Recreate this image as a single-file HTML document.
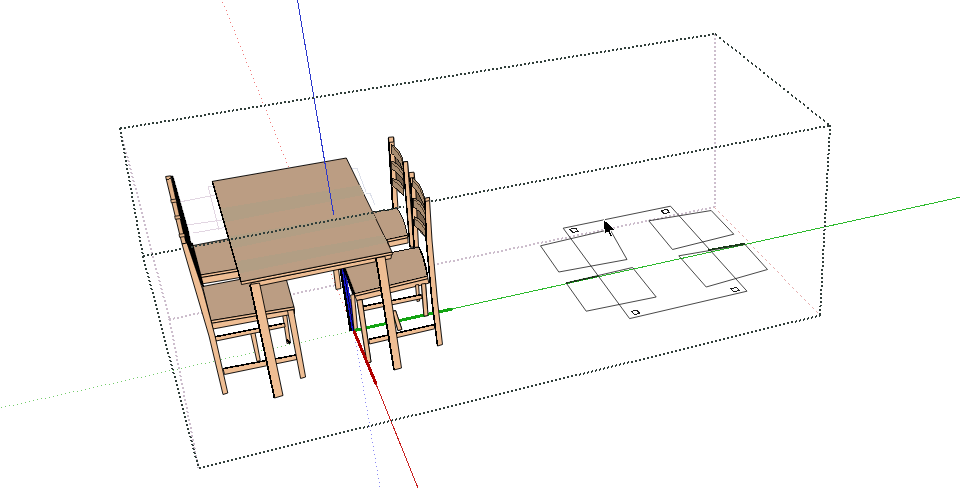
<!DOCTYPE html>
<html><head><meta charset="utf-8"><title>SketchUp view</title>
<style>html,body{margin:0;padding:0;background:#fff;overflow:hidden}svg{display:block}</style>
</head><body>
<svg shape-rendering="crispEdges" width="960" height="488" viewBox="0 0 960 488">
<rect width="960" height="488" fill="#fff"/>
<path d="M119,128h2v1h-2zM119,129h2v1h-2zM120,132h2v1h-2zM120,133h2v1h-2zM121,136h2v1h-2zM121,137h2v1h-2zM122,140h2v1h-2zM122,141h2v1h-2zM123,144h2v1h-2zM123,145h2v1h-2zM124,148h2v1h-2zM124,149h2v1h-2zM125,152h2v1h-2zM125,153h2v1h-2zM126,156h2v1h-2zM127,157h2v1h-2zM127,160h2v1h-2zM128,161h2v1h-2zM128,164h2v1h-2zM129,165h2v1h-2zM129,168h2v1h-2zM130,169h2v1h-2zM130,172h2v1h-2zM131,173h2v1h-2zM131,176h2v1h-2zM132,177h2v1h-2zM132,180h2v1h-2zM133,181h2v1h-2zM133,184h2v1h-2zM134,185h2v1h-2zM135,188h2v1h-2zM135,189h2v1h-2zM136,192h2v1h-2zM136,193h2v1h-2zM137,196h2v1h-2zM137,197h2v1h-2zM138,200h2v1h-2zM138,201h2v1h-2zM139,204h2v1h-2zM139,205h2v1h-2zM140,208h2v1h-2zM140,209h2v1h-2zM141,212h2v1h-2zM141,213h2v1h-2zM142,216h2v1h-2zM142,217h2v1h-2zM143,220h2v1h-2zM143,221h2v1h-2zM144,224h2v1h-2zM144,225h2v1h-2zM145,228h2v1h-2zM145,229h2v1h-2zM146,232h2v1h-2zM146,233h2v1h-2zM147,236h2v1h-2zM147,237h2v1h-2zM148,240h2v1h-2zM148,241h2v1h-2zM149,244h2v1h-2zM149,245h2v1h-2zM150,248h2v1h-2zM150,249h2v1h-2zM151,252h2v1h-2zM151,253h2v1h-2zM152,256h2v1h-2zM152,257h2v1h-2zM153,260h2v1h-2zM153,261h2v1h-2zM154,264h2v1h-2zM154,265h2v1h-2zM155,268h2v1h-2zM155,269h2v1h-2zM156,272h2v1h-2zM157,273h2v1h-2zM157,276h2v1h-2zM158,277h2v1h-2zM158,280h2v1h-2zM159,281h2v1h-2zM159,284h2v1h-2zM160,285h2v1h-2zM160,288h2v1h-2zM161,289h2v1h-2zM161,292h2v1h-2zM162,293h2v1h-2zM162,296h2v1h-2zM163,297h2v1h-2zM164,300h2v1h-2zM164,301h2v1h-2zM165,304h2v1h-2zM165,305h2v1h-2zM166,308h2v1h-2zM166,309h2v1h-2zM167,312h2v1h-2zM167,313h2v1h-2zM168,316h2v1h-2zM168,317h2v1h-2z" fill="#cdbecd" shape-rendering="crispEdges"/>
<path d="M168,319h2v1h-2zM169,320h2v1h-2zM169,323h2v1h-2zM169,324h2v1h-2zM170,327h2v1h-2zM170,328h2v1h-2zM171,331h2v1h-2zM171,332h2v1h-2zM172,335h2v1h-2zM172,336h2v1h-2zM172,339h2v1h-2zM173,340h2v1h-2zM173,343h2v1h-2zM173,344h2v1h-2zM174,347h2v1h-2zM174,348h2v1h-2zM175,351h2v1h-2zM175,352h2v1h-2zM175,355h2v1h-2zM176,356h2v1h-2zM176,359h2v1h-2zM176,360h2v1h-2zM177,363h2v1h-2zM177,364h2v1h-2zM178,367h2v1h-2zM178,368h2v1h-2zM179,371h2v1h-2zM179,372h2v1h-2zM179,375h2v1h-2zM180,376h2v1h-2zM180,379h2v1h-2zM180,380h2v1h-2zM181,383h2v1h-2zM181,384h2v1h-2zM182,387h2v1h-2zM182,388h2v1h-2zM183,391h2v1h-2zM183,392h2v1h-2zM183,395h2v1h-2zM183,396h2v1h-2zM184,399h2v1h-2zM184,400h2v1h-2zM185,403h2v1h-2zM185,404h2v1h-2zM186,407h2v1h-2zM186,408h2v1h-2zM186,411h2v1h-2zM187,412h2v1h-2zM187,415h2v1h-2zM187,416h2v1h-2zM188,419h2v1h-2zM188,420h2v1h-2zM189,423h2v1h-2zM189,424h2v1h-2zM190,427h2v1h-2zM190,428h2v1h-2zM190,431h2v1h-2zM191,432h2v1h-2zM191,435h2v1h-2zM191,436h2v1h-2zM192,439h2v1h-2zM192,440h2v1h-2zM193,443h2v1h-2zM193,444h2v1h-2zM193,447h2v1h-2zM194,448h2v1h-2zM194,451h2v1h-2zM194,452h2v1h-2zM195,455h2v1h-2zM195,456h2v1h-2zM196,459h2v1h-2zM196,460h2v1h-2zM197,463h2v1h-2zM197,464h2v1h-2zM197,467h2v1h-2z" fill="#cdbecd" shape-rendering="crispEdges"/>
<path d="M169,318h1v2h-1zM170,318h1v2h-1zM173,318h1v2h-1zM174,317h1v2h-1zM177,317h1v2h-1zM178,317h1v2h-1zM181,316h1v2h-1zM182,316h1v2h-1zM185,315h1v2h-1zM186,315h1v2h-1zM189,314h1v2h-1zM190,314h1v2h-1zM193,313h1v2h-1zM194,313h1v2h-1zM197,313h1v2h-1zM198,312h1v2h-1zM201,312h1v2h-1zM202,312h1v2h-1zM205,311h1v2h-1zM206,311h1v2h-1zM209,310h1v2h-1zM210,310h1v2h-1zM213,309h1v2h-1zM214,309h1v2h-1zM217,308h1v2h-1zM218,308h1v2h-1zM221,308h1v2h-1zM222,307h1v2h-1zM225,307h1v2h-1zM226,307h1v2h-1zM229,306h1v2h-1zM230,306h1v2h-1zM233,305h1v2h-1zM234,305h1v2h-1zM237,304h1v2h-1zM238,304h1v2h-1zM241,304h1v2h-1zM242,303h1v2h-1zM245,303h1v2h-1zM246,303h1v2h-1zM249,302h1v2h-1zM250,302h1v2h-1zM253,301h1v2h-1zM254,301h1v2h-1zM257,300h1v2h-1zM258,300h1v2h-1zM261,299h1v2h-1zM262,299h1v2h-1zM265,299h1v2h-1zM266,298h1v2h-1zM269,298h1v2h-1zM270,298h1v2h-1zM273,297h1v2h-1zM274,297h1v2h-1zM277,296h1v2h-1zM278,296h1v2h-1zM281,295h1v2h-1zM282,295h1v2h-1zM285,294h1v2h-1zM286,294h1v2h-1zM289,294h1v2h-1zM290,293h1v2h-1zM293,293h1v2h-1zM294,293h1v2h-1zM297,292h1v2h-1zM298,292h1v2h-1zM301,291h1v2h-1zM302,291h1v2h-1zM305,290h1v2h-1zM306,290h1v2h-1zM309,290h1v2h-1zM310,289h1v2h-1zM313,289h1v2h-1zM314,288h1v2h-1zM317,288h1v2h-1zM318,288h1v2h-1zM321,287h1v2h-1zM322,287h1v2h-1zM325,286h1v2h-1zM326,286h1v2h-1zM329,285h1v2h-1zM330,285h1v2h-1zM333,285h1v2h-1zM334,284h1v2h-1zM337,284h1v2h-1zM338,284h1v2h-1zM341,283h1v2h-1zM342,283h1v2h-1zM345,282h1v2h-1zM346,282h1v2h-1zM349,281h1v2h-1zM350,281h1v2h-1zM353,280h1v2h-1zM354,280h1v2h-1zM357,280h1v2h-1zM358,279h1v2h-1zM361,279h1v2h-1zM362,279h1v2h-1zM365,278h1v2h-1zM366,278h1v2h-1zM369,277h1v2h-1zM370,277h1v2h-1zM373,276h1v2h-1zM374,276h1v2h-1zM377,275h1v2h-1zM378,275h1v2h-1zM381,275h1v2h-1zM382,274h1v2h-1zM385,274h1v2h-1zM386,274h1v2h-1zM389,273h1v2h-1zM390,273h1v2h-1zM393,272h1v2h-1zM394,272h1v2h-1zM397,271h1v2h-1zM398,271h1v2h-1zM401,271h1v2h-1zM402,270h1v2h-1zM405,270h1v2h-1zM406,270h1v2h-1zM409,269h1v2h-1zM410,269h1v2h-1zM413,268h1v2h-1zM414,268h1v2h-1zM417,267h1v2h-1zM418,267h1v2h-1zM421,266h1v2h-1zM422,266h1v2h-1zM425,266h1v2h-1zM426,265h1v2h-1zM429,265h1v2h-1zM430,265h1v2h-1zM433,264h1v2h-1zM434,264h1v2h-1zM437,263h1v2h-1zM438,263h1v2h-1zM441,262h1v2h-1zM442,262h1v2h-1zM445,261h1v2h-1zM446,261h1v2h-1zM449,261h1v2h-1zM450,260h1v2h-1zM453,260h1v2h-1zM454,260h1v2h-1zM457,259h1v2h-1zM458,259h1v2h-1zM461,258h1v2h-1zM462,258h1v2h-1zM465,257h1v2h-1zM466,257h1v2h-1zM469,257h1v2h-1zM470,256h1v2h-1zM473,256h1v2h-1zM474,255h1v2h-1zM477,255h1v2h-1zM478,255h1v2h-1zM481,254h1v2h-1zM482,254h1v2h-1zM485,253h1v2h-1zM486,253h1v2h-1zM489,252h1v2h-1zM490,252h1v2h-1zM493,252h1v2h-1zM494,251h1v2h-1zM497,251h1v2h-1zM498,251h1v2h-1zM501,250h1v2h-1zM502,250h1v2h-1zM505,249h1v2h-1zM506,249h1v2h-1zM509,248h1v2h-1zM510,248h1v2h-1zM513,247h1v2h-1zM514,247h1v2h-1zM517,247h1v2h-1zM518,246h1v2h-1zM521,246h1v2h-1zM522,246h1v2h-1zM525,245h1v2h-1zM526,245h1v2h-1zM529,244h1v2h-1zM530,244h1v2h-1zM533,243h1v2h-1zM534,243h1v2h-1zM537,242h1v2h-1zM538,242h1v2h-1zM541,242h1v2h-1zM542,241h1v2h-1zM545,241h1v2h-1zM546,241h1v2h-1zM549,240h1v2h-1zM550,240h1v2h-1zM553,239h1v2h-1zM554,239h1v2h-1zM557,238h1v2h-1zM558,238h1v2h-1zM561,238h1v2h-1zM562,237h1v2h-1zM565,237h1v2h-1zM566,237h1v2h-1zM569,236h1v2h-1zM570,236h1v2h-1zM573,235h1v2h-1zM574,235h1v2h-1zM577,234h1v2h-1zM578,234h1v2h-1zM581,233h1v2h-1zM582,233h1v2h-1zM585,233h1v2h-1zM586,232h1v2h-1zM589,232h1v2h-1zM590,232h1v2h-1zM593,231h1v2h-1zM594,231h1v2h-1zM597,230h1v2h-1zM598,230h1v2h-1zM601,229h1v2h-1zM602,229h1v2h-1zM605,228h1v2h-1zM606,228h1v2h-1zM609,228h1v2h-1zM610,227h1v2h-1zM613,227h1v2h-1zM614,227h1v2h-1zM617,226h1v2h-1zM618,226h1v2h-1zM621,225h1v2h-1zM622,225h1v2h-1zM625,224h1v2h-1zM626,224h1v2h-1zM629,224h1v2h-1zM630,223h1v2h-1zM633,223h1v2h-1zM634,222h1v2h-1zM637,222h1v2h-1zM638,222h1v2h-1zM641,221h1v2h-1zM642,221h1v2h-1zM645,220h1v2h-1zM646,220h1v2h-1zM649,219h1v2h-1zM650,219h1v2h-1zM653,219h1v2h-1zM654,218h1v2h-1zM657,218h1v2h-1zM658,218h1v2h-1zM661,217h1v2h-1zM662,217h1v2h-1zM665,216h1v2h-1zM666,216h1v2h-1zM669,215h1v2h-1zM670,215h1v2h-1zM673,214h1v2h-1zM674,214h1v2h-1zM677,214h1v2h-1zM678,213h1v2h-1zM681,213h1v2h-1zM682,213h1v2h-1zM685,212h1v2h-1zM686,212h1v2h-1zM689,211h1v2h-1zM690,211h1v2h-1zM693,210h1v2h-1zM694,210h1v2h-1zM697,210h1v2h-1zM698,209h1v2h-1zM701,209h1v2h-1zM702,208h1v2h-1zM705,208h1v2h-1zM706,208h1v2h-1zM709,207h1v2h-1zM710,207h1v2h-1zM713,206h1v2h-1z" fill="#cdbecd" shape-rendering="crispEdges"/>
<path d="M714,34h2v1h-2zM714,35h2v1h-2zM714,38h2v1h-2zM714,39h2v1h-2zM714,42h2v1h-2zM714,43h2v1h-2zM714,46h2v1h-2zM714,47h2v1h-2zM714,50h2v1h-2zM714,51h2v1h-2zM714,54h2v1h-2zM714,55h2v1h-2zM714,58h2v1h-2zM714,59h2v1h-2zM714,62h2v1h-2zM714,63h2v1h-2zM714,66h2v1h-2zM714,67h2v1h-2zM714,70h2v1h-2zM714,71h2v1h-2zM714,74h2v1h-2zM714,75h2v1h-2zM714,78h2v1h-2zM714,79h2v1h-2zM714,82h2v1h-2zM714,83h2v1h-2zM714,86h2v1h-2zM714,87h2v1h-2zM714,90h2v1h-2zM714,91h2v1h-2zM714,94h2v1h-2zM714,95h2v1h-2zM714,98h2v1h-2zM714,99h2v1h-2zM714,102h2v1h-2zM714,103h2v1h-2zM714,106h2v1h-2zM714,107h2v1h-2zM714,110h2v1h-2zM714,111h2v1h-2zM714,114h2v1h-2zM714,115h2v1h-2zM714,118h2v1h-2zM714,119h2v1h-2zM714,122h2v1h-2zM714,123h2v1h-2zM714,126h2v1h-2zM714,127h2v1h-2zM714,130h2v1h-2zM714,131h2v1h-2zM714,134h2v1h-2zM714,135h2v1h-2zM714,138h2v1h-2zM714,139h2v1h-2zM714,142h2v1h-2zM714,143h2v1h-2zM714,146h2v1h-2zM714,147h2v1h-2zM714,150h2v1h-2zM714,151h2v1h-2zM714,154h2v1h-2zM714,155h2v1h-2zM714,158h2v1h-2zM714,159h2v1h-2zM714,162h2v1h-2zM714,163h2v1h-2zM714,166h2v1h-2zM714,167h2v1h-2zM714,170h2v1h-2zM714,171h2v1h-2zM714,174h2v1h-2zM714,175h2v1h-2zM714,178h2v1h-2zM714,179h2v1h-2zM714,182h2v1h-2zM714,183h2v1h-2zM714,186h2v1h-2zM714,187h2v1h-2zM714,190h2v1h-2zM714,191h2v1h-2zM714,194h2v1h-2zM714,195h2v1h-2zM714,198h2v1h-2zM714,199h2v1h-2zM714,202h2v1h-2zM714,203h2v1h-2zM714,206h2v1h-2z" fill="#cdbecd" shape-rendering="crispEdges"/>
<path d="M714,207h1v1h-1zM715,208h1v1h-1zM718,211h1v1h-1zM719,212h1v1h-1zM722,215h1v1h-1zM723,216h1v1h-1zM726,219h1v1h-1zM727,220h1v1h-1zM730,223h1v1h-1zM731,224h1v1h-1zM734,227h1v1h-1zM735,228h1v1h-1zM738,231h1v1h-1zM739,232h1v1h-1zM742,235h1v1h-1zM743,236h1v1h-1zM746,239h1v1h-1zM747,240h1v1h-1zM749,243h1v1h-1zM750,244h1v1h-1zM753,247h1v1h-1zM754,248h1v1h-1zM757,251h1v1h-1zM758,252h1v1h-1zM761,255h1v1h-1zM762,256h1v1h-1zM765,259h1v1h-1zM766,260h1v1h-1zM769,263h1v1h-1zM770,264h1v1h-1zM773,267h1v1h-1zM774,268h1v1h-1zM777,271h1v1h-1zM778,272h1v1h-1zM781,275h1v1h-1zM782,276h1v1h-1zM784,279h1v1h-1zM785,280h1v1h-1zM788,283h1v1h-1zM789,284h1v1h-1zM792,287h1v1h-1zM793,288h1v1h-1zM796,291h1v1h-1zM797,292h1v1h-1zM800,295h1v1h-1zM801,296h1v1h-1zM804,299h1v1h-1zM805,300h1v1h-1zM808,303h1v1h-1zM809,304h1v1h-1zM812,307h1v1h-1zM813,308h1v1h-1zM816,311h1v1h-1zM817,312h1v1h-1z" fill="#e6b0b0" shape-rendering="crispEdges"/>
<path d="M353,330h1v1h-1zM349,331h1v1h-1zM345,332h1v1h-1zM341,333h1v1h-1zM337,334h1v1h-1zM333,335h1v1h-1zM329,335h1v1h-1zM325,336h1v1h-1zM321,337h1v1h-1zM317,338h1v1h-1zM313,339h1v1h-1zM309,340h1v1h-1zM305,341h1v1h-1zM301,342h1v1h-1zM297,342h1v1h-1zM293,343h1v1h-1zM289,344h1v1h-1zM285,345h1v1h-1zM281,346h1v1h-1zM277,347h1v1h-1zM273,348h1v1h-1zM269,349h1v1h-1zM265,349h1v1h-1zM261,350h1v1h-1zM257,351h1v1h-1zM253,352h1v1h-1zM249,353h1v1h-1zM245,354h1v1h-1zM241,355h1v1h-1zM237,356h1v1h-1zM233,356h1v1h-1zM229,357h1v1h-1zM225,358h1v1h-1zM221,359h1v1h-1zM217,360h1v1h-1zM213,361h1v1h-1zM209,362h1v1h-1zM205,363h1v1h-1zM201,363h1v1h-1zM197,364h1v1h-1zM193,365h1v1h-1zM189,366h1v1h-1zM185,367h1v1h-1zM181,368h1v1h-1zM177,369h1v1h-1zM173,370h1v1h-1zM169,370h1v1h-1zM165,371h1v1h-1zM161,372h1v1h-1zM157,373h1v1h-1zM153,374h1v1h-1zM149,375h1v1h-1zM145,376h1v1h-1zM141,377h1v1h-1zM137,377h1v1h-1zM133,378h1v1h-1zM129,379h1v1h-1zM125,380h1v1h-1zM121,381h1v1h-1zM117,382h1v1h-1zM113,383h1v1h-1zM109,384h1v1h-1zM105,384h1v1h-1zM101,385h1v1h-1zM97,386h1v1h-1zM93,387h1v1h-1zM89,388h1v1h-1zM85,389h1v1h-1zM81,390h1v1h-1zM77,391h1v1h-1zM73,391h1v1h-1zM69,392h1v1h-1zM65,393h1v1h-1zM61,394h1v1h-1zM57,395h1v1h-1zM53,396h1v1h-1zM49,397h1v1h-1zM45,398h1v1h-1zM41,398h1v1h-1zM37,399h1v1h-1zM33,400h1v1h-1zM29,401h1v1h-1zM25,402h1v1h-1zM21,403h1v1h-1zM17,404h1v1h-1zM13,405h1v1h-1zM9,405h1v1h-1zM5,406h1v1h-1zM1,407h1v1h-1z" fill="#74cc6c" shape-rendering="crispEdges"/>
<path d="M353,330h1v1h-1zM352,326h1v1h-1zM350,322h1v1h-1zM348,318h1v1h-1zM347,314h1v1h-1zM345,310h1v1h-1zM344,306h1v1h-1zM342,302h1v1h-1zM340,298h1v1h-1zM339,294h1v1h-1zM337,290h1v1h-1zM336,286h1v1h-1zM334,282h1v1h-1zM332,278h1v1h-1zM331,274h1v1h-1zM329,270h1v1h-1zM328,266h1v1h-1zM326,262h1v1h-1zM325,258h1v1h-1zM323,254h1v1h-1zM321,250h1v1h-1zM320,246h1v1h-1zM318,242h1v1h-1zM317,238h1v1h-1zM315,234h1v1h-1zM313,230h1v1h-1zM312,226h1v1h-1zM310,222h1v1h-1zM309,218h1v1h-1zM307,214h1v1h-1zM305,210h1v1h-1zM304,206h1v1h-1zM302,202h1v1h-1zM301,198h1v1h-1zM299,194h1v1h-1zM297,190h1v1h-1zM296,186h1v1h-1zM294,182h1v1h-1zM293,178h1v1h-1zM291,174h1v1h-1zM289,170h1v1h-1zM288,166h1v1h-1zM286,162h1v1h-1zM285,158h1v1h-1zM283,154h1v1h-1zM281,150h1v1h-1zM280,146h1v1h-1zM278,142h1v1h-1zM277,138h1v1h-1zM275,134h1v1h-1zM274,130h1v1h-1zM272,126h1v1h-1zM270,122h1v1h-1zM269,118h1v1h-1zM267,114h1v1h-1zM266,110h1v1h-1zM264,106h1v1h-1zM262,102h1v1h-1zM261,98h1v1h-1zM259,94h1v1h-1zM258,90h1v1h-1zM256,86h1v1h-1zM254,82h1v1h-1zM253,78h1v1h-1zM251,74h1v1h-1zM250,70h1v1h-1zM248,66h1v1h-1zM246,62h1v1h-1zM245,58h1v1h-1zM243,54h1v1h-1zM242,50h1v1h-1zM240,46h1v1h-1zM238,42h1v1h-1zM237,38h1v1h-1zM235,34h1v1h-1zM234,30h1v1h-1zM232,26h1v1h-1zM230,22h1v1h-1zM229,18h1v1h-1zM227,14h1v1h-1zM226,10h1v1h-1zM224,6h1v1h-1zM222,2h1v1h-1z" fill="#ee7c7c" shape-rendering="crispEdges"/>
<path d="M353,330h1v1h-1zM354,334h1v1h-1zM355,338h1v1h-1zM355,342h1v1h-1zM356,346h1v1h-1zM357,350h1v1h-1zM357,354h1v1h-1zM358,358h1v1h-1zM359,362h1v1h-1zM359,366h1v1h-1zM360,370h1v1h-1zM361,374h1v1h-1zM361,378h1v1h-1zM362,382h1v1h-1zM363,386h1v1h-1zM363,390h1v1h-1zM364,394h1v1h-1zM365,398h1v1h-1zM365,402h1v1h-1zM366,406h1v1h-1zM367,410h1v1h-1zM367,414h1v1h-1zM368,418h1v1h-1zM369,422h1v1h-1zM369,426h1v1h-1zM370,430h1v1h-1zM371,434h1v1h-1zM371,438h1v1h-1zM372,442h1v1h-1zM373,446h1v1h-1zM373,450h1v1h-1zM374,454h1v1h-1zM375,458h1v1h-1zM375,462h1v1h-1zM376,466h1v1h-1zM377,470h1v1h-1zM377,474h1v1h-1zM378,478h1v1h-1zM379,482h1v1h-1zM379,486h1v1h-1z" fill="#8a8af2" shape-rendering="crispEdges"/>
<polyline points="452.0,308.9 960.0,197.2" fill="none" stroke="#2cba2c" stroke-width="1" />
<polyline points="376.2,384.4 418.0,488.0" fill="none" stroke="#c82020" stroke-width="1" />
<polyline points="297.5,0.0 333.7,214.5" fill="none" stroke="#2c38cc" stroke-width="1" />
<polygon points="563.2,228.2 670.5,206.2 747.0,291.2 629.6,318.6" fill="none" stroke="#1a1a1a" stroke-width="0.8" stroke-linejoin="round" />
<polygon points="540.5,245.8 610.0,229.5 627.0,259.5 558.8,272.0" fill="none" stroke="#1a1a1a" stroke-width="0.8" stroke-linejoin="round" />
<polygon points="566.2,283.0 632.5,267.5 656.2,297.0 586.2,311.2" fill="none" stroke="#1a1a1a" stroke-width="0.8" stroke-linejoin="round" />
<polygon points="648.8,220.8 711.2,210.5 733.8,234.2 672.5,249.5" fill="none" stroke="#1a1a1a" stroke-width="0.8" stroke-linejoin="round" />
<polygon points="678.8,255.8 745.0,244.5 767.5,269.5 706.2,287.0" fill="none" stroke="#1a1a1a" stroke-width="0.8" stroke-linejoin="round" />
<polygon points="569.9,229.3 575.6,228.2 578.5,231.3 572.8,232.4" fill="none" stroke="#1a1a1a" stroke-width="1.0" stroke-linejoin="round" />
<polygon points="661.1,210.5 666.8,209.4 669.7,212.5 664.0,213.6" fill="none" stroke="#1a1a1a" stroke-width="1.0" stroke-linejoin="round" />
<polygon points="730.7,288.6 736.4,287.5 739.3,290.6 733.6,291.7" fill="none" stroke="#1a1a1a" stroke-width="1.0" stroke-linejoin="round" />
<polygon points="631.3,311.4 637.0,310.3 639.9,313.4 634.2,314.5" fill="none" stroke="#1a1a1a" stroke-width="1.0" stroke-linejoin="round" />
<polyline points="566.5,283.0 598.0,276.0" fill="none" stroke="#1a3a1a" stroke-width="1.6" />
<polyline points="708.0,250.0 745.0,243.5" fill="none" stroke="#1a3a1a" stroke-width="1.6" />
<polyline points="180.0,201.9 215.0,195.0" fill="none" stroke="#e2d6e2" stroke-width="1" />
<polyline points="208.0,186.3 212.5,186.3" fill="none" stroke="#e2d6e2" stroke-width="1" />
<polyline points="208.0,186.3 219.0,230.0" fill="none" stroke="#e2d6e2" stroke-width="1" />
<polyline points="187.5,225.0 222.5,220.0" fill="none" stroke="#e2d6e2" stroke-width="1" />
<polyline points="193.0,233.0 225.0,227.5" fill="none" stroke="#e2d6e2" stroke-width="1" />
<polyline points="352.0,169.0 357.0,168.0 366.0,192.0" fill="none" stroke="#dde0ea" stroke-width="1" />
<polyline points="366.0,194.0 370.0,193.0 375.0,205.0" fill="none" stroke="#dde0ea" stroke-width="1" />
<polygon points="333.5,270.0 338.5,269.0 341.0,288.5 336.0,289.5" fill="#eebd93" stroke="#000" stroke-width="0.9" stroke-linejoin="round" />
<polyline points="340.6,268.5 350.9,331.0" fill="none" stroke="#000" stroke-width="2.6" />
<polyline points="343.4,268.0 353.8,330.6" fill="none" stroke="#1616cc" stroke-width="3.8" />
<polyline points="343.4,268.0 353.8,330.6" fill="none" stroke="#000030" stroke-width="0.9" />
<path d="M391,146 L402.8,160 L404,196 L392.6,186 Z" fill="#7a634e" stroke="#000" stroke-width="0.6"/>
<polygon points="388.3,138.0 393.8,137.5 398.0,209.0 393.0,209.0" fill="#eebd93" stroke="#000" stroke-width="0.9" stroke-linejoin="round" />
<polyline points="388.6,138.0 393.0,209.0" fill="none" stroke="#000" stroke-width="1.8" />
<path d="M391,144.3 Q398.5,147.5 402.8,158.4 L403.2,169 Q397,157 391.3,153 Z" fill="#a88c70" stroke="#000" stroke-width="0.8"/>
<path d="M391.5,146.8 Q398,150.5 402.9,162.5" fill="none" stroke="#3a2a1c" stroke-width="0.8"/>
<path d="M391.7,161 Q399,164 403.1,171.4 L403.6,180.6 Q398,172 392,169.5 Z" fill="#a88c70" stroke="#000" stroke-width="0.8"/>
<path d="M392.2,163.5 Q398.5,167 403.3,175" fill="none" stroke="#3a2a1c" stroke-width="0.8"/>
<path d="M392.3,178 Q399.5,180 403.4,186 L404,196 Q398.5,189 392.6,186 Z" fill="#a88c70" stroke="#000" stroke-width="0.8"/>
<path d="M392.8,180.5 Q399,183 403.6,190" fill="none" stroke="#3a2a1c" stroke-width="0.8"/>
<polygon points="388.5,137.3 393.5,136.9 393.6,142.0 388.8,142.4" fill="#eebd93" stroke="#000" stroke-width="0.9" stroke-linejoin="round" />
<polygon points="403.0,162.0 407.5,161.5 414.0,247.0 410.0,247.0" fill="#eebd93" stroke="#000" stroke-width="0.9" stroke-linejoin="round" />
<polyline points="403.0,162.0 410.0,247.0" fill="none" stroke="#000" stroke-width="1.4" />
<path d="M360,214 L397.3,208.4 Q404,218 407.5,235.3 L387.2,239.6 L370,246 Z" fill="#bb9d83" stroke="#000" stroke-width="0.9"/>
<polygon points="387.2,239.6 407.5,235.3 407.8,237.8 387.7,242.1" fill="#eebd93" stroke="#000" stroke-width="0.9" stroke-linejoin="round" />
<polygon points="387.7,242.1 407.8,237.8 408.2,242.9 389.7,246.8" fill="#eebd93" stroke="#000" stroke-width="0.9" stroke-linejoin="round" />
<polygon points="403.0,162.0 407.5,161.5 414.0,247.0 410.0,247.0" fill="#eebd93" stroke="#000" stroke-width="0.9" stroke-linejoin="round" />
<polyline points="403.0,162.0 410.0,247.0" fill="none" stroke="#000" stroke-width="1.4" />
<polygon points="171.0,176.0 173.0,176.0 188.5,231.0 191.0,243.5 186.0,243.5 183.0,231.0" fill="#000" stroke="#000" stroke-width="0.5" stroke-linejoin="round" />
<polygon points="165.6,176.5 170.6,175.8 183.0,231.0 186.3,243.5 182.0,244.0 178.8,231.0" fill="#e2b289" stroke="#000" stroke-width="0.9" stroke-linejoin="round" />
<polygon points="170.7,199.8 176.1,199.0 176.7,202.0 171.3,202.8" fill="#e2b289" stroke="#000" stroke-width="0.8" stroke-linejoin="round" />
<polygon points="174.7,216.3 180.1,215.5 180.7,218.5 175.3,219.3" fill="#e2b289" stroke="#000" stroke-width="0.8" stroke-linejoin="round" />
<polygon points="179.0,234.3 184.4,233.5 185.0,236.5 179.6,237.3" fill="#e2b289" stroke="#000" stroke-width="0.8" stroke-linejoin="round" />
<polyline points="166.0,179.5 170.8,178.7" fill="none" stroke="#000" stroke-width="0.8" />
<polygon points="192.8,245.6 250.0,234.5 258.0,266.0 200.6,275.0" fill="#bb9d83" stroke="#000" stroke-width="0.9" stroke-linejoin="round" />
<polygon points="200.6,275.0 245.0,267.5 245.5,270.0 201.2,277.6" fill="#eebd93" stroke="#000" stroke-width="0.9" stroke-linejoin="round" />
<polygon points="201.2,277.6 245.5,270.0 246.0,276.5 202.6,283.8" fill="#eebd93" stroke="#000" stroke-width="0.9" stroke-linejoin="round" />
<polygon points="282.5,314.0 286.5,313.5 290.5,343.0 287.0,343.5" fill="#eebd93" stroke="#000" stroke-width="0.9" stroke-linejoin="round" />
<polyline points="286.5,340.0 290.5,343.0" fill="none" stroke="#000" stroke-width="2" />
<polygon points="250.0,330.5 254.5,330.0 260.3,360.5 257.0,361.5" fill="#eebd93" stroke="#000" stroke-width="0.9" stroke-linejoin="round" />
<polygon points="202.5,286.5 284.0,271.0 294.0,307.0 211.0,320.7" fill="#bb9d83" stroke="#000" stroke-width="0.9" stroke-linejoin="round" />
<polygon points="211.0,320.7 294.0,307.0 294.5,309.6 211.7,323.3" fill="#eebd93" stroke="#000" stroke-width="0.9" stroke-linejoin="round" />
<polygon points="211.7,323.3 294.5,309.6 294.5,313.8 213.0,329.0" fill="#eebd93" stroke="#000" stroke-width="0.9" stroke-linejoin="round" />
<polygon points="215.0,336.8 284.5,323.2 285.2,326.8 216.0,341.0" fill="#eebd93" stroke="#000" stroke-width="0.9" stroke-linejoin="round" />
<polyline points="215.0,336.8 284.5,323.2" fill="none" stroke="#000" stroke-width="1.6" />
<polygon points="223.0,368.6 296.0,355.0 297.0,359.5 224.5,374.5" fill="#eebd93" stroke="#000" stroke-width="0.9" stroke-linejoin="round" />
<polyline points="223.0,368.6 296.0,355.0" fill="none" stroke="#000" stroke-width="1.6" />
<polygon points="287.5,310.6 293.5,309.8 305.6,377.0 300.6,378.5" fill="#eebd93" stroke="#000" stroke-width="0.9" stroke-linejoin="round" />
<polygon points="187.0,243.0 192.5,243.0 204.0,287.0 197.5,281.0" fill="#000" stroke="#000" stroke-width="0.5" stroke-linejoin="round" />
<polygon points="182.0,244.0 187.0,243.0 199.5,280.0 202.8,290.0 215.0,336.0 227.8,393.0 223.0,394.5 209.0,336.0 192.5,280.0" fill="#eebd93" stroke="#000" stroke-width="0.9" stroke-linejoin="round" />
<polygon points="350.6,295.0 354.5,294.5 357.5,329.0 354.0,329.5" fill="#eebd93" stroke="#000" stroke-width="0.9" stroke-linejoin="round" />
<polygon points="421.5,284.0 425.5,283.5 428.0,315.5 424.0,316.2" fill="#eebd93" stroke="#000" stroke-width="0.9" stroke-linejoin="round" />
<polygon points="392.5,311.3 395.6,310.6 401.9,329.4 398.0,330.6" fill="#eebd93" stroke="#000" stroke-width="0.9" stroke-linejoin="round" />
<path d="M412.6,180 L425.2,201 L426.3,238 L414.4,225.7 Z" fill="#7a634e" stroke="#000" stroke-width="0.6"/>
<polygon points="408.8,173.5 414.0,173.0 415.5,185.0 418.5,247.0 414.0,247.5 411.0,185.0" fill="#eebd93" stroke="#000" stroke-width="0.9" stroke-linejoin="round" />
<polyline points="408.8,173.5 411.0,185.0 414.0,247.5" fill="none" stroke="#000" stroke-width="1.8" />
<path d="M412.4,178.2 Q420.5,181.5 425.2,199.5 L425.4,208.5 Q419.5,193 412.8,186.4 Z" fill="#a88c70" stroke="#000" stroke-width="0.8"/>
<path d="M412.8,180.8 Q420,185 425.3,203" fill="none" stroke="#3a2a1c" stroke-width="0.8"/>
<path d="M413.1,197.9 Q421,200 425.4,211 L425.7,220.8 Q420,210 413.5,207.7 Z" fill="#a88c70" stroke="#000" stroke-width="0.8"/>
<path d="M413.5,200.4 Q420.5,203.5 425.5,214.5" fill="none" stroke="#3a2a1c" stroke-width="0.8"/>
<path d="M414,216.7 Q421.5,219 426,228 L426.3,238 Q420.5,229 414.4,225.7 Z" fill="#a88c70" stroke="#000" stroke-width="0.8"/>
<path d="M414.4,219.2 Q421,222 426.1,231.5" fill="none" stroke="#3a2a1c" stroke-width="0.8"/>
<polygon points="409.0,172.6 414.0,172.2 414.3,177.5 409.4,178.0" fill="#eebd93" stroke="#000" stroke-width="0.9" stroke-linejoin="round" />
<path d="M340,262 L418.75,247 Q424,256 427.5,276.2 L354.4,293.75 Z" fill="#bb9d83" stroke="#000" stroke-width="0.9"/>
<polygon points="342.5,266.0 344.5,266.0 355.2,294.0 352.6,294.5" fill="#000" stroke="#000" stroke-width="0.6" stroke-linejoin="round" />
<path d="M418.75,247 Q424,256 427.5,276.2" fill="none" stroke="#000" stroke-width="1.6"/>
<polygon points="354.4,293.8 427.5,276.2 428.0,278.8 355.0,296.3" fill="#eebd93" stroke="#000" stroke-width="0.9" stroke-linejoin="round" />
<polygon points="355.0,296.3 428.0,278.8 428.8,283.2 357.0,301.0" fill="#eebd93" stroke="#000" stroke-width="0.9" stroke-linejoin="round" />
<polygon points="415.5,285.0 418.6,284.5 419.6,301.0 417.0,301.5" fill="#eebd93" stroke="#000" stroke-width="0.9" stroke-linejoin="round" />
<polygon points="362.5,306.5 421.5,294.6 422.0,298.5 363.5,310.8" fill="#eebd93" stroke="#000" stroke-width="0.9" stroke-linejoin="round" />
<polyline points="362.5,306.5 421.5,294.6" fill="none" stroke="#000" stroke-width="1.6" />
<polygon points="368.8,339.4 435.0,324.4 435.6,328.6 369.6,344.0" fill="#eebd93" stroke="#000" stroke-width="0.9" stroke-linejoin="round" />
<polyline points="368.8,339.4 435.0,324.4" fill="none" stroke="#000" stroke-width="1.6" />
<polygon points="357.0,300.5 362.0,299.5 371.0,362.0 367.0,363.0" fill="#eebd93" stroke="#000" stroke-width="0.9" stroke-linejoin="round" />
<polyline points="353.8,330.6 452.5,308.9" fill="none" stroke="#12a412" stroke-width="3" />
<polygon points="392.5,311.3 395.6,310.6 401.9,329.4 398.0,330.6" fill="#eebd93" stroke="#000" stroke-width="0.9" stroke-linejoin="round" />
<polygon points="357.0,300.5 362.0,299.5 371.0,362.0 367.0,363.0" fill="#eebd93" stroke="#000" stroke-width="0.9" stroke-linejoin="round" />
<polygon points="421.5,284.0 425.5,283.5 428.0,315.5 424.0,316.2" fill="#eebd93" stroke="#000" stroke-width="0.9" stroke-linejoin="round" />
<polygon points="425.0,198.5 429.4,197.5 432.0,240.0 437.5,301.0 442.5,344.5 437.5,346.0 432.0,301.0 426.2,240.0" fill="#eebd93" stroke="#000" stroke-width="0.9" stroke-linejoin="round" />
<polyline points="425.0,198.5 426.2,240.0 432.0,301.0 437.5,346.0" fill="none" stroke="#000" stroke-width="1.6" />
<polygon points="425.0,198.3 429.4,197.3 429.7,200.5 425.3,201.5" fill="#eebd93" stroke="#000" stroke-width="0.9" stroke-linejoin="round" />
<polyline points="353.8,330.6 376.2,384.4" fill="none" stroke="#b00000" stroke-width="3" />
<polygon points="251.0,282.8 391.5,254.6 391.0,258.5 252.0,287.4" fill="#eebd93" stroke="#000" stroke-width="0.9" stroke-linejoin="round" />
<polygon points="250.0,284.5 259.5,283.0 283.0,395.5 274.5,398.0" fill="#eebd93" stroke="#000" stroke-width="0.9" stroke-linejoin="round" />
<polyline points="250.0,284.5 274.5,398.0" fill="none" stroke="#000" stroke-width="1.8" />
<polygon points="376.0,258.0 385.0,256.5 401.5,368.0 394.0,370.0" fill="#eebd93" stroke="#000" stroke-width="0.9" stroke-linejoin="round" />
<polyline points="376.0,258.0 394.0,370.0" fill="none" stroke="#000" stroke-width="1.8" />
<polygon points="241.0,281.7 392.0,252.0 392.5,254.5 241.5,284.5" fill="#eebd93" stroke="#000" stroke-width="0.9" stroke-linejoin="round" />
<polygon points="212.3,181.4 346.3,158.0 392.0,252.0 241.0,281.7" fill="#bb9d83" stroke="#000" stroke-width="0.9" stroke-linejoin="round" />
<polygon points="220.0,208.5 359.6,185.3 364.1,194.7 224.1,222.5" fill="#b29e84" stroke="none" stroke-width="0" stroke-linejoin="round" />
<polygon points="228.1,236.6 372.3,211.6 376.0,219.1 231.5,248.6" fill="#b29e84" stroke="none" stroke-width="0" stroke-linejoin="round" />
<polygon points="235.3,261.6 383.8,235.1 387.4,242.6 238.7,273.7" fill="#b29e84" stroke="none" stroke-width="0" stroke-linejoin="round" />
<polyline points="212.3,181.4 241.0,281.7" fill="none" stroke="#000" stroke-width="1.5" />
<polyline points="320.0,134.0 333.7,214.5" fill="none" stroke="#2c38cc" stroke-width="1" />
<path d="M120,127h1v2h-1zM121,127h1v2h-1zM124,127h1v2h-1zM125,127h1v2h-1zM128,126h1v2h-1zM129,126h1v2h-1zM132,126h1v2h-1zM133,125h1v2h-1zM136,125h1v2h-1zM137,125h1v2h-1zM140,124h1v2h-1zM141,124h1v2h-1zM144,124h1v2h-1zM145,123h1v2h-1zM148,123h1v2h-1zM149,123h1v2h-1zM152,122h1v2h-1zM153,122h1v2h-1zM156,122h1v2h-1zM157,122h1v2h-1zM160,121h1v2h-1zM161,121h1v2h-1zM164,120h1v2h-1zM165,120h1v2h-1zM168,120h1v2h-1zM169,120h1v2h-1zM172,119h1v2h-1zM173,119h1v2h-1zM176,119h1v2h-1zM177,118h1v2h-1zM180,118h1v2h-1zM181,118h1v2h-1zM184,117h1v2h-1zM185,117h1v2h-1zM188,117h1v2h-1zM189,116h1v2h-1zM192,116h1v2h-1zM193,116h1v2h-1zM196,115h1v2h-1zM197,115h1v2h-1zM200,115h1v2h-1zM201,115h1v2h-1zM204,114h1v2h-1zM205,114h1v2h-1zM208,113h1v2h-1zM209,113h1v2h-1zM212,113h1v2h-1zM213,113h1v2h-1zM216,112h1v2h-1zM217,112h1v2h-1zM220,112h1v2h-1zM221,111h1v2h-1zM224,111h1v2h-1zM225,111h1v2h-1zM228,110h1v2h-1zM229,110h1v2h-1zM232,110h1v2h-1zM233,109h1v2h-1zM236,109h1v2h-1zM237,109h1v2h-1zM240,108h1v2h-1zM241,108h1v2h-1zM244,108h1v2h-1zM245,108h1v2h-1zM248,107h1v2h-1zM249,107h1v2h-1zM252,106h1v2h-1zM253,106h1v2h-1zM256,106h1v2h-1zM257,106h1v2h-1zM260,105h1v2h-1zM261,105h1v2h-1zM264,105h1v2h-1zM265,104h1v2h-1zM268,104h1v2h-1zM269,104h1v2h-1zM272,103h1v2h-1zM273,103h1v2h-1zM276,103h1v2h-1zM277,102h1v2h-1zM280,102h1v2h-1zM281,102h1v2h-1zM284,101h1v2h-1zM285,101h1v2h-1zM288,101h1v2h-1zM289,101h1v2h-1zM292,100h1v2h-1zM293,100h1v2h-1zM296,99h1v2h-1zM297,99h1v2h-1zM300,99h1v2h-1zM301,99h1v2h-1zM304,98h1v2h-1zM305,98h1v2h-1zM308,98h1v2h-1zM309,97h1v2h-1zM312,97h1v2h-1zM313,97h1v2h-1zM316,96h1v2h-1zM317,96h1v2h-1zM320,96h1v2h-1zM321,95h1v2h-1zM324,95h1v2h-1zM325,95h1v2h-1zM328,94h1v2h-1zM329,94h1v2h-1zM332,94h1v2h-1zM333,94h1v2h-1zM336,93h1v2h-1zM337,93h1v2h-1zM340,92h1v2h-1zM341,92h1v2h-1zM344,92h1v2h-1zM345,92h1v2h-1zM348,91h1v2h-1zM349,91h1v2h-1zM352,91h1v2h-1zM353,90h1v2h-1zM356,90h1v2h-1zM357,90h1v2h-1zM360,89h1v2h-1zM361,89h1v2h-1zM364,89h1v2h-1zM365,89h1v2h-1zM368,88h1v2h-1zM369,88h1v2h-1zM372,87h1v2h-1zM373,87h1v2h-1zM376,87h1v2h-1zM377,87h1v2h-1zM380,86h1v2h-1zM381,86h1v2h-1zM384,85h1v2h-1zM385,85h1v2h-1zM388,85h1v2h-1zM389,85h1v2h-1zM392,84h1v2h-1zM393,84h1v2h-1zM396,84h1v2h-1zM397,83h1v2h-1zM400,83h1v2h-1zM401,83h1v2h-1zM404,82h1v2h-1zM405,82h1v2h-1zM408,82h1v2h-1zM409,82h1v2h-1zM412,81h1v2h-1zM413,81h1v2h-1zM416,80h1v2h-1zM417,80h1v2h-1zM420,80h1v2h-1zM421,80h1v2h-1zM424,79h1v2h-1zM425,79h1v2h-1zM428,79h1v2h-1zM429,78h1v2h-1zM432,78h1v2h-1zM433,78h1v2h-1zM436,77h1v2h-1zM437,77h1v2h-1zM440,77h1v2h-1zM441,76h1v2h-1zM444,76h1v2h-1zM445,76h1v2h-1zM448,75h1v2h-1zM449,75h1v2h-1zM452,75h1v2h-1zM453,75h1v2h-1zM456,74h1v2h-1zM457,74h1v2h-1zM460,73h1v2h-1zM461,73h1v2h-1zM464,73h1v2h-1zM465,73h1v2h-1zM468,72h1v2h-1zM469,72h1v2h-1zM472,72h1v2h-1zM473,71h1v2h-1zM476,71h1v2h-1zM477,71h1v2h-1zM480,70h1v2h-1zM481,70h1v2h-1zM484,70h1v2h-1zM485,69h1v2h-1zM488,69h1v2h-1zM489,69h1v2h-1zM492,68h1v2h-1zM493,68h1v2h-1zM496,68h1v2h-1zM497,68h1v2h-1zM500,67h1v2h-1zM501,67h1v2h-1zM504,66h1v2h-1zM505,66h1v2h-1zM508,66h1v2h-1zM509,66h1v2h-1zM512,65h1v2h-1zM513,65h1v2h-1zM516,65h1v2h-1zM517,64h1v2h-1zM520,64h1v2h-1zM521,64h1v2h-1zM524,63h1v2h-1zM525,63h1v2h-1zM528,63h1v2h-1zM529,62h1v2h-1zM532,62h1v2h-1zM533,62h1v2h-1zM536,61h1v2h-1zM537,61h1v2h-1zM540,61h1v2h-1zM541,61h1v2h-1zM544,60h1v2h-1zM545,60h1v2h-1zM548,59h1v2h-1zM549,59h1v2h-1zM552,59h1v2h-1zM553,59h1v2h-1zM556,58h1v2h-1zM557,58h1v2h-1zM560,58h1v2h-1zM561,57h1v2h-1zM564,57h1v2h-1zM565,57h1v2h-1zM568,56h1v2h-1zM569,56h1v2h-1zM572,56h1v2h-1zM573,55h1v2h-1zM576,55h1v2h-1zM577,55h1v2h-1zM580,54h1v2h-1zM581,54h1v2h-1zM584,54h1v2h-1zM585,54h1v2h-1zM588,53h1v2h-1zM589,53h1v2h-1zM592,52h1v2h-1zM593,52h1v2h-1zM596,52h1v2h-1zM597,52h1v2h-1zM600,51h1v2h-1zM601,51h1v2h-1zM604,51h1v2h-1zM605,50h1v2h-1zM608,50h1v2h-1zM609,50h1v2h-1zM612,49h1v2h-1zM613,49h1v2h-1zM616,49h1v2h-1zM617,48h1v2h-1zM620,48h1v2h-1zM621,48h1v2h-1zM624,47h1v2h-1zM625,47h1v2h-1zM628,47h1v2h-1zM629,47h1v2h-1zM632,46h1v2h-1zM633,46h1v2h-1zM636,45h1v2h-1zM637,45h1v2h-1zM640,45h1v2h-1zM641,45h1v2h-1zM644,44h1v2h-1zM645,44h1v2h-1zM648,44h1v2h-1zM649,43h1v2h-1zM652,43h1v2h-1zM653,43h1v2h-1zM656,42h1v2h-1zM657,42h1v2h-1zM660,42h1v2h-1zM661,41h1v2h-1zM664,41h1v2h-1zM665,41h1v2h-1zM668,40h1v2h-1zM669,40h1v2h-1zM672,40h1v2h-1zM673,40h1v2h-1zM676,39h1v2h-1zM677,39h1v2h-1zM680,38h1v2h-1zM681,38h1v2h-1zM684,38h1v2h-1zM685,38h1v2h-1zM688,37h1v2h-1zM689,37h1v2h-1zM692,37h1v2h-1zM693,36h1v2h-1zM696,36h1v2h-1zM697,36h1v2h-1zM700,35h1v2h-1zM701,35h1v2h-1zM704,35h1v2h-1zM705,35h1v2h-1zM708,34h1v2h-1zM709,34h1v2h-1zM712,33h1v2h-1zM713,33h1v2h-1z" fill="#303e3a" shape-rendering="crispEdges"/>
<path d="M715,33h1v2h-1zM716,34h1v2h-1zM719,37h1v2h-1zM720,37h1v2h-1zM723,40h1v2h-1zM724,41h1v2h-1zM727,43h1v2h-1zM728,44h1v2h-1zM731,46h1v2h-1zM732,47h1v2h-1zM735,49h1v2h-1zM736,50h1v2h-1zM739,52h1v2h-1zM740,53h1v2h-1zM743,56h1v2h-1zM744,56h1v2h-1zM747,59h1v2h-1zM748,60h1v2h-1zM751,62h1v2h-1zM752,63h1v2h-1zM755,65h1v2h-1zM756,66h1v2h-1zM759,68h1v2h-1zM760,69h1v2h-1zM763,72h1v2h-1zM764,72h1v2h-1zM767,75h1v2h-1zM768,76h1v2h-1zM771,78h1v2h-1zM772,79h1v2h-1zM775,81h1v2h-1zM776,82h1v2h-1zM779,84h1v2h-1zM780,85h1v2h-1zM783,88h1v2h-1zM784,88h1v2h-1zM787,91h1v2h-1zM788,91h1v2h-1zM791,94h1v2h-1zM792,95h1v2h-1zM795,97h1v2h-1zM796,98h1v2h-1zM799,100h1v2h-1zM800,101h1v2h-1zM803,103h1v2h-1zM804,104h1v2h-1zM807,107h1v2h-1zM808,107h1v2h-1zM811,110h1v2h-1zM812,111h1v2h-1zM815,113h1v2h-1zM816,114h1v2h-1zM819,116h1v2h-1zM820,117h1v2h-1zM823,119h1v2h-1zM824,120h1v2h-1zM827,123h1v2h-1zM828,123h1v2h-1z" fill="#303e3a" shape-rendering="crispEdges"/>
<path d="M829,125h2v1h-2zM829,126h2v1h-2zM829,129h2v1h-2zM829,130h2v1h-2zM829,133h2v1h-2zM829,134h2v1h-2zM828,137h2v1h-2zM828,138h2v1h-2zM828,141h2v1h-2zM828,142h2v1h-2zM828,145h2v1h-2zM828,146h2v1h-2zM828,149h2v1h-2zM828,150h2v1h-2zM828,153h2v1h-2zM827,154h2v1h-2zM827,157h2v1h-2zM827,158h2v1h-2zM827,161h2v1h-2zM827,162h2v1h-2zM827,165h2v1h-2zM827,166h2v1h-2zM827,169h2v1h-2zM827,170h2v1h-2zM826,173h2v1h-2zM826,174h2v1h-2zM826,177h2v1h-2zM826,178h2v1h-2zM826,181h2v1h-2zM826,182h2v1h-2zM826,185h2v1h-2zM826,186h2v1h-2zM826,189h2v1h-2zM826,190h2v1h-2zM825,193h2v1h-2zM825,194h2v1h-2zM825,197h2v1h-2zM825,198h2v1h-2zM825,201h2v1h-2zM825,202h2v1h-2zM825,205h2v1h-2zM825,206h2v1h-2zM825,209h2v1h-2zM825,210h2v1h-2zM824,213h2v1h-2zM824,214h2v1h-2zM824,217h2v1h-2zM824,218h2v1h-2zM824,221h2v1h-2zM824,222h2v1h-2zM824,225h2v1h-2zM824,226h2v1h-2zM824,229h2v1h-2zM823,230h2v1h-2zM823,233h2v1h-2zM823,234h2v1h-2zM823,237h2v1h-2zM823,238h2v1h-2zM823,241h2v1h-2zM823,242h2v1h-2zM823,245h2v1h-2zM823,246h2v1h-2zM822,249h2v1h-2zM822,250h2v1h-2zM822,253h2v1h-2zM822,254h2v1h-2zM822,257h2v1h-2zM822,258h2v1h-2zM822,261h2v1h-2zM822,262h2v1h-2zM822,265h2v1h-2zM822,266h2v1h-2zM821,269h2v1h-2zM821,270h2v1h-2zM821,273h2v1h-2zM821,274h2v1h-2zM821,277h2v1h-2zM821,278h2v1h-2zM821,281h2v1h-2zM821,282h2v1h-2zM821,285h2v1h-2zM821,286h2v1h-2zM820,289h2v1h-2zM820,290h2v1h-2zM820,293h2v1h-2zM820,294h2v1h-2zM820,297h2v1h-2zM820,298h2v1h-2zM820,301h2v1h-2zM820,302h2v1h-2zM820,305h2v1h-2zM819,306h2v1h-2zM819,309h2v1h-2zM819,310h2v1h-2zM819,313h2v1h-2zM819,314h2v1h-2z" fill="#303e3a" shape-rendering="crispEdges"/>
<path d="M820,314h1v2h-1zM819,315h1v2h-1zM816,315h1v2h-1zM815,316h1v2h-1zM812,316h1v2h-1zM811,317h1v2h-1zM808,317h1v2h-1zM807,318h1v2h-1zM804,318h1v2h-1zM803,319h1v2h-1zM800,319h1v2h-1zM799,320h1v2h-1zM796,320h1v2h-1zM795,321h1v2h-1zM792,321h1v2h-1zM791,321h1v2h-1zM788,322h1v2h-1zM787,322h1v2h-1zM784,323h1v2h-1zM783,323h1v2h-1zM780,324h1v2h-1zM779,324h1v2h-1zM776,325h1v2h-1zM775,325h1v2h-1zM772,326h1v2h-1zM771,326h1v2h-1zM768,327h1v2h-1zM767,327h1v2h-1zM764,328h1v2h-1zM763,328h1v2h-1zM760,329h1v2h-1zM759,329h1v2h-1zM756,330h1v2h-1zM755,330h1v2h-1zM752,331h1v2h-1zM751,331h1v2h-1zM748,332h1v2h-1zM747,332h1v2h-1zM744,333h1v2h-1zM743,333h1v2h-1zM740,334h1v2h-1zM739,334h1v2h-1zM736,335h1v2h-1zM735,335h1v2h-1zM732,336h1v2h-1zM731,336h1v2h-1zM728,337h1v2h-1zM727,337h1v2h-1zM724,338h1v2h-1zM723,338h1v2h-1zM720,339h1v2h-1zM719,339h1v2h-1zM716,340h1v2h-1zM715,340h1v2h-1zM712,341h1v2h-1zM711,341h1v2h-1zM708,342h1v2h-1zM707,342h1v2h-1zM704,343h1v2h-1zM703,343h1v2h-1zM700,344h1v2h-1zM699,344h1v2h-1zM696,345h1v2h-1zM695,345h1v2h-1zM692,346h1v2h-1zM691,346h1v2h-1zM688,347h1v2h-1zM687,347h1v2h-1zM684,348h1v2h-1zM683,348h1v2h-1zM680,349h1v2h-1zM679,349h1v2h-1zM676,350h1v2h-1zM675,350h1v2h-1zM672,351h1v2h-1zM671,351h1v2h-1zM668,352h1v2h-1zM667,352h1v2h-1zM664,353h1v2h-1zM663,353h1v2h-1zM660,354h1v2h-1zM659,354h1v2h-1zM656,355h1v2h-1zM655,355h1v2h-1zM652,356h1v2h-1zM651,356h1v2h-1zM648,357h1v2h-1zM647,357h1v2h-1zM644,358h1v2h-1zM643,358h1v2h-1zM640,359h1v2h-1zM639,359h1v2h-1zM636,360h1v2h-1zM635,360h1v2h-1zM632,361h1v2h-1zM631,361h1v2h-1zM628,361h1v2h-1zM627,362h1v2h-1zM624,362h1v2h-1zM623,363h1v2h-1zM620,363h1v2h-1zM619,364h1v2h-1zM616,364h1v2h-1zM615,365h1v2h-1zM612,365h1v2h-1zM611,366h1v2h-1zM608,366h1v2h-1zM607,367h1v2h-1zM604,367h1v2h-1zM603,368h1v2h-1zM600,368h1v2h-1zM599,369h1v2h-1zM596,369h1v2h-1zM595,370h1v2h-1zM592,370h1v2h-1zM591,371h1v2h-1zM588,371h1v2h-1zM587,372h1v2h-1zM584,372h1v2h-1zM583,373h1v2h-1zM580,373h1v2h-1zM579,374h1v2h-1zM576,374h1v2h-1zM575,374h1v2h-1zM572,375h1v2h-1zM571,375h1v2h-1zM568,376h1v2h-1zM567,376h1v2h-1zM564,377h1v2h-1zM563,377h1v2h-1zM560,378h1v2h-1zM559,378h1v2h-1zM556,379h1v2h-1zM555,379h1v2h-1zM552,380h1v2h-1zM551,380h1v2h-1zM548,381h1v2h-1zM547,381h1v2h-1zM544,382h1v2h-1zM543,382h1v2h-1zM540,383h1v2h-1zM539,383h1v2h-1zM536,384h1v2h-1zM535,384h1v2h-1zM532,385h1v2h-1zM531,385h1v2h-1zM528,386h1v2h-1zM527,386h1v2h-1zM524,387h1v2h-1zM523,387h1v2h-1zM520,388h1v2h-1zM519,388h1v2h-1zM516,389h1v2h-1zM515,389h1v2h-1zM512,390h1v2h-1zM511,390h1v2h-1zM508,391h1v2h-1zM507,391h1v2h-1zM504,392h1v2h-1zM503,392h1v2h-1zM500,393h1v2h-1zM499,393h1v2h-1zM496,394h1v2h-1zM495,394h1v2h-1zM492,395h1v2h-1zM491,395h1v2h-1zM488,396h1v2h-1zM487,396h1v2h-1zM484,397h1v2h-1zM483,397h1v2h-1zM480,398h1v2h-1zM479,398h1v2h-1zM476,399h1v2h-1zM475,399h1v2h-1zM472,400h1v2h-1zM471,400h1v2h-1zM468,401h1v2h-1zM467,401h1v2h-1zM464,402h1v2h-1zM463,402h1v2h-1zM460,403h1v2h-1zM459,403h1v2h-1zM456,404h1v2h-1zM455,404h1v2h-1zM452,405h1v2h-1zM451,405h1v2h-1zM448,406h1v2h-1zM447,406h1v2h-1zM444,407h1v2h-1zM443,407h1v2h-1zM440,408h1v2h-1zM439,408h1v2h-1zM436,409h1v2h-1zM435,409h1v2h-1zM432,410h1v2h-1zM431,410h1v2h-1zM428,411h1v2h-1zM427,411h1v2h-1zM424,412h1v2h-1zM423,412h1v2h-1zM420,413h1v2h-1zM419,413h1v2h-1zM416,414h1v2h-1zM415,414h1v2h-1zM412,414h1v2h-1zM411,415h1v2h-1zM408,415h1v2h-1zM407,416h1v2h-1zM404,416h1v2h-1zM403,417h1v2h-1zM400,417h1v2h-1zM399,418h1v2h-1zM396,418h1v2h-1zM395,419h1v2h-1zM392,419h1v2h-1zM391,420h1v2h-1zM388,420h1v2h-1zM387,421h1v2h-1zM384,421h1v2h-1zM383,422h1v2h-1zM380,422h1v2h-1zM379,423h1v2h-1zM376,423h1v2h-1zM375,424h1v2h-1zM372,424h1v2h-1zM371,425h1v2h-1zM368,425h1v2h-1zM367,426h1v2h-1zM364,426h1v2h-1zM363,427h1v2h-1zM360,427h1v2h-1zM359,427h1v2h-1zM356,428h1v2h-1zM355,428h1v2h-1zM352,429h1v2h-1zM351,429h1v2h-1zM348,430h1v2h-1zM347,430h1v2h-1zM344,431h1v2h-1zM343,431h1v2h-1zM340,432h1v2h-1zM339,432h1v2h-1zM336,433h1v2h-1zM335,433h1v2h-1zM332,434h1v2h-1zM331,434h1v2h-1zM328,435h1v2h-1zM327,435h1v2h-1zM324,436h1v2h-1zM323,436h1v2h-1zM320,437h1v2h-1zM319,437h1v2h-1zM316,438h1v2h-1zM315,438h1v2h-1zM312,439h1v2h-1zM311,439h1v2h-1zM308,440h1v2h-1zM307,440h1v2h-1zM304,441h1v2h-1zM303,441h1v2h-1zM300,442h1v2h-1zM299,442h1v2h-1zM296,443h1v2h-1zM295,443h1v2h-1zM292,444h1v2h-1zM291,444h1v2h-1zM288,445h1v2h-1zM287,445h1v2h-1zM284,446h1v2h-1zM283,446h1v2h-1zM280,447h1v2h-1zM279,447h1v2h-1zM276,448h1v2h-1zM275,448h1v2h-1zM272,449h1v2h-1zM271,449h1v2h-1zM268,450h1v2h-1zM267,450h1v2h-1zM264,451h1v2h-1zM263,451h1v2h-1zM260,452h1v2h-1zM259,452h1v2h-1zM256,453h1v2h-1zM255,453h1v2h-1zM252,454h1v2h-1zM251,454h1v2h-1zM248,455h1v2h-1zM247,455h1v2h-1zM244,456h1v2h-1zM243,456h1v2h-1zM240,457h1v2h-1zM239,457h1v2h-1zM236,458h1v2h-1zM235,458h1v2h-1zM232,459h1v2h-1zM231,459h1v2h-1zM228,460h1v2h-1zM227,460h1v2h-1zM224,461h1v2h-1zM223,461h1v2h-1zM220,462h1v2h-1zM219,462h1v2h-1zM216,463h1v2h-1zM215,463h1v2h-1zM212,464h1v2h-1zM211,464h1v2h-1zM208,465h1v2h-1zM207,465h1v2h-1zM204,466h1v2h-1zM203,466h1v2h-1zM200,467h1v2h-1zM199,467h1v2h-1z" fill="#303e3a" shape-rendering="crispEdges"/>
<path d="M142,256h2v1h-2zM142,257h2v1h-2zM143,260h2v1h-2zM143,261h2v1h-2zM144,264h2v1h-2zM144,265h2v1h-2zM145,268h2v1h-2zM145,269h2v1h-2zM146,272h2v1h-2zM147,273h2v1h-2zM147,276h2v1h-2zM148,277h2v1h-2zM148,280h2v1h-2zM149,281h2v1h-2zM149,284h2v1h-2zM150,285h2v1h-2zM150,288h2v1h-2zM151,289h2v1h-2zM152,292h2v1h-2zM152,293h2v1h-2zM153,296h2v1h-2zM153,297h2v1h-2zM154,300h2v1h-2zM154,301h2v1h-2zM155,304h2v1h-2zM155,305h2v1h-2zM156,308h2v1h-2zM156,309h2v1h-2zM157,312h2v1h-2zM157,313h2v1h-2zM158,316h2v1h-2zM158,317h2v1h-2zM159,320h2v1h-2zM159,321h2v1h-2zM160,324h2v1h-2zM160,325h2v1h-2zM161,328h2v1h-2zM161,329h2v1h-2zM162,332h2v1h-2zM162,333h2v1h-2zM163,336h2v1h-2zM163,337h2v1h-2zM164,340h2v1h-2zM164,341h2v1h-2zM165,344h2v1h-2zM165,345h2v1h-2zM166,348h2v1h-2zM166,349h2v1h-2zM167,352h2v1h-2zM167,353h2v1h-2zM168,356h2v1h-2zM169,357h2v1h-2zM169,360h2v1h-2zM170,361h2v1h-2zM170,364h2v1h-2zM171,365h2v1h-2zM171,368h2v1h-2zM172,369h2v1h-2zM172,372h2v1h-2zM173,373h2v1h-2zM174,376h2v1h-2zM174,377h2v1h-2zM175,380h2v1h-2zM175,381h2v1h-2zM176,384h2v1h-2zM176,385h2v1h-2zM177,388h2v1h-2zM177,389h2v1h-2zM178,392h2v1h-2zM178,393h2v1h-2zM179,396h2v1h-2zM179,397h2v1h-2zM180,400h2v1h-2zM180,401h2v1h-2zM181,404h2v1h-2zM181,405h2v1h-2zM182,408h2v1h-2zM182,409h2v1h-2zM183,412h2v1h-2zM183,413h2v1h-2zM184,416h2v1h-2zM184,417h2v1h-2zM185,420h2v1h-2zM185,421h2v1h-2zM186,424h2v1h-2zM186,425h2v1h-2zM187,428h2v1h-2zM187,429h2v1h-2zM188,432h2v1h-2zM188,433h2v1h-2zM189,436h2v1h-2zM190,437h2v1h-2zM190,440h2v1h-2zM191,441h2v1h-2zM191,444h2v1h-2zM192,445h2v1h-2zM192,448h2v1h-2zM193,449h2v1h-2zM193,452h2v1h-2zM194,453h2v1h-2zM194,456h2v1h-2zM195,457h2v1h-2zM196,460h2v1h-2zM196,461h2v1h-2zM197,464h2v1h-2zM197,465h2v1h-2z" fill="#303e3a" shape-rendering="crispEdges"/>
<path d="M119,128h2v1h-2zM119,129h2v1h-2zM120,132h2v1h-2zM120,133h2v1h-2zM120,136h2v1h-2zM121,137h2v1h-2zM121,140h2v1h-2zM121,141h2v1h-2zM122,144h2v1h-2zM122,145h2v1h-2zM123,148h2v1h-2zM123,149h2v1h-2zM123,152h2v1h-2zM124,153h2v1h-2zM124,156h2v1h-2zM124,157h2v1h-2zM125,160h2v1h-2zM125,161h2v1h-2zM125,164h2v1h-2zM126,165h2v1h-2zM126,168h2v1h-2zM126,169h2v1h-2zM127,172h2v1h-2zM127,173h2v1h-2zM128,176h2v1h-2zM128,177h2v1h-2zM128,180h2v1h-2zM129,181h2v1h-2zM129,184h2v1h-2zM129,185h2v1h-2zM130,188h2v1h-2zM130,189h2v1h-2zM131,192h2v1h-2zM131,193h2v1h-2zM131,196h2v1h-2zM131,197h2v1h-2zM132,200h2v1h-2zM132,201h2v1h-2zM133,204h2v1h-2zM133,205h2v1h-2zM133,208h2v1h-2zM134,209h2v1h-2zM134,212h2v1h-2zM134,213h2v1h-2zM135,216h2v1h-2zM135,217h2v1h-2zM136,220h2v1h-2zM136,221h2v1h-2zM136,224h2v1h-2zM136,225h2v1h-2zM137,228h2v1h-2zM137,229h2v1h-2zM138,232h2v1h-2zM138,233h2v1h-2zM138,236h2v1h-2zM139,237h2v1h-2zM139,240h2v1h-2zM139,241h2v1h-2zM140,244h2v1h-2zM140,245h2v1h-2zM141,248h2v1h-2zM141,249h2v1h-2zM141,252h2v1h-2zM142,253h2v1h-2z" fill="#303e3a" shape-rendering="crispEdges"/>
<path d="M143,255h1v2h-1zM144,255h1v2h-1zM147,254h1v2h-1zM148,254h1v2h-1zM151,254h1v2h-1zM152,253h1v2h-1zM155,253h1v2h-1zM156,253h1v2h-1zM159,252h1v2h-1zM160,252h1v2h-1zM163,251h1v2h-1zM164,251h1v2h-1zM167,251h1v2h-1zM168,250h1v2h-1zM171,250h1v2h-1zM172,250h1v2h-1zM175,249h1v2h-1zM176,249h1v2h-1zM179,248h1v2h-1zM180,248h1v2h-1zM191,246h1v2h-1zM192,246h1v2h-1zM195,245h1v2h-1zM196,245h1v2h-1zM199,244h1v2h-1zM200,244h1v2h-1zM203,244h1v2h-1zM204,244h1v2h-1zM207,243h1v2h-1zM208,243h1v2h-1zM211,242h1v2h-1zM212,242h1v2h-1zM215,241h1v2h-1zM216,241h1v2h-1zM219,241h1v2h-1zM220,241h1v2h-1zM223,240h1v2h-1zM224,240h1v2h-1zM227,239h1v2h-1zM228,239h1v2h-1zM231,238h1v2h-1zM232,238h1v2h-1zM235,238h1v2h-1zM236,237h1v2h-1zM239,237h1v2h-1zM240,237h1v2h-1zM243,236h1v2h-1zM244,236h1v2h-1zM247,235h1v2h-1zM248,235h1v2h-1zM251,235h1v2h-1zM252,234h1v2h-1zM255,234h1v2h-1zM256,234h1v2h-1zM259,233h1v2h-1zM260,233h1v2h-1zM263,232h1v2h-1zM264,232h1v2h-1zM267,232h1v2h-1zM268,231h1v2h-1zM271,231h1v2h-1zM272,231h1v2h-1zM275,230h1v2h-1zM276,230h1v2h-1zM279,229h1v2h-1zM280,229h1v2h-1zM283,229h1v2h-1zM284,228h1v2h-1zM287,228h1v2h-1zM288,228h1v2h-1zM291,227h1v2h-1zM292,227h1v2h-1zM295,226h1v2h-1zM296,226h1v2h-1zM299,225h1v2h-1zM300,225h1v2h-1zM303,225h1v2h-1zM304,225h1v2h-1zM307,224h1v2h-1zM308,224h1v2h-1zM311,223h1v2h-1zM312,223h1v2h-1zM315,222h1v2h-1zM316,222h1v2h-1zM319,222h1v2h-1zM320,221h1v2h-1zM323,221h1v2h-1zM324,221h1v2h-1zM327,220h1v2h-1zM328,220h1v2h-1zM331,219h1v2h-1zM332,219h1v2h-1zM335,219h1v2h-1zM336,218h1v2h-1zM339,218h1v2h-1zM340,218h1v2h-1zM343,217h1v2h-1zM344,217h1v2h-1zM347,216h1v2h-1zM348,216h1v2h-1zM351,216h1v2h-1zM352,215h1v2h-1zM355,215h1v2h-1zM356,215h1v2h-1zM359,214h1v2h-1zM360,214h1v2h-1zM363,213h1v2h-1zM364,213h1v2h-1zM367,213h1v2h-1zM368,212h1v2h-1zM371,212h1v2h-1zM372,212h1v2h-1zM375,211h1v2h-1zM376,211h1v2h-1zM379,210h1v2h-1zM380,210h1v2h-1zM383,209h1v2h-1zM384,209h1v2h-1zM387,209h1v2h-1zM388,209h1v2h-1zM391,208h1v2h-1zM392,208h1v2h-1zM395,207h1v2h-1zM396,207h1v2h-1zM399,206h1v2h-1zM400,206h1v2h-1zM403,206h1v2h-1zM431,200h1v2h-1zM432,200h1v2h-1zM435,200h1v2h-1zM436,199h1v2h-1zM439,199h1v2h-1zM440,199h1v2h-1zM443,198h1v2h-1zM444,198h1v2h-1zM447,197h1v2h-1zM448,197h1v2h-1zM451,197h1v2h-1zM452,196h1v2h-1zM455,196h1v2h-1zM456,196h1v2h-1zM459,195h1v2h-1zM460,195h1v2h-1zM463,194h1v2h-1zM464,194h1v2h-1zM467,193h1v2h-1zM468,193h1v2h-1zM471,193h1v2h-1zM472,193h1v2h-1zM475,192h1v2h-1zM476,192h1v2h-1zM479,191h1v2h-1zM480,191h1v2h-1zM483,190h1v2h-1zM484,190h1v2h-1zM487,190h1v2h-1zM488,189h1v2h-1zM491,189h1v2h-1zM492,189h1v2h-1zM495,188h1v2h-1zM496,188h1v2h-1zM499,187h1v2h-1zM500,187h1v2h-1zM503,187h1v2h-1zM504,186h1v2h-1zM507,186h1v2h-1zM508,186h1v2h-1zM511,185h1v2h-1zM512,185h1v2h-1zM515,184h1v2h-1zM516,184h1v2h-1zM519,184h1v2h-1zM520,183h1v2h-1zM523,183h1v2h-1zM524,183h1v2h-1zM527,182h1v2h-1zM528,182h1v2h-1zM531,181h1v2h-1zM532,181h1v2h-1zM535,181h1v2h-1zM536,180h1v2h-1zM539,180h1v2h-1zM540,180h1v2h-1zM543,179h1v2h-1zM544,179h1v2h-1zM547,178h1v2h-1zM548,178h1v2h-1zM551,178h1v2h-1zM552,177h1v2h-1zM555,177h1v2h-1zM556,177h1v2h-1zM559,176h1v2h-1zM560,176h1v2h-1zM563,175h1v2h-1zM564,175h1v2h-1zM567,174h1v2h-1zM568,174h1v2h-1zM571,174h1v2h-1zM572,174h1v2h-1zM575,173h1v2h-1zM576,173h1v2h-1zM579,172h1v2h-1zM580,172h1v2h-1zM583,171h1v2h-1zM584,171h1v2h-1zM587,171h1v2h-1zM588,170h1v2h-1zM591,170h1v2h-1zM592,170h1v2h-1zM595,169h1v2h-1zM596,169h1v2h-1zM599,168h1v2h-1zM600,168h1v2h-1zM603,168h1v2h-1zM604,167h1v2h-1zM607,167h1v2h-1zM608,167h1v2h-1zM611,166h1v2h-1zM612,166h1v2h-1zM615,165h1v2h-1zM616,165h1v2h-1zM619,165h1v2h-1zM620,164h1v2h-1zM623,164h1v2h-1zM624,164h1v2h-1zM627,163h1v2h-1zM628,163h1v2h-1zM631,162h1v2h-1zM632,162h1v2h-1zM635,162h1v2h-1zM636,161h1v2h-1zM639,161h1v2h-1zM640,161h1v2h-1zM643,160h1v2h-1zM644,160h1v2h-1zM647,159h1v2h-1zM648,159h1v2h-1zM651,158h1v2h-1zM652,158h1v2h-1zM655,158h1v2h-1zM656,158h1v2h-1zM659,157h1v2h-1zM660,157h1v2h-1zM663,156h1v2h-1zM664,156h1v2h-1zM667,155h1v2h-1zM668,155h1v2h-1zM671,155h1v2h-1zM672,154h1v2h-1zM675,154h1v2h-1zM676,154h1v2h-1zM679,153h1v2h-1zM680,153h1v2h-1zM683,152h1v2h-1zM684,152h1v2h-1zM687,152h1v2h-1zM688,151h1v2h-1zM691,151h1v2h-1zM692,151h1v2h-1zM695,150h1v2h-1zM696,150h1v2h-1zM699,149h1v2h-1zM700,149h1v2h-1zM703,149h1v2h-1zM704,148h1v2h-1zM707,148h1v2h-1zM708,148h1v2h-1zM711,147h1v2h-1zM712,147h1v2h-1zM715,146h1v2h-1zM716,146h1v2h-1zM719,146h1v2h-1zM720,145h1v2h-1zM723,145h1v2h-1zM724,145h1v2h-1zM727,144h1v2h-1zM728,144h1v2h-1zM731,143h1v2h-1zM732,143h1v2h-1zM735,142h1v2h-1zM736,142h1v2h-1zM739,142h1v2h-1zM740,142h1v2h-1zM743,141h1v2h-1zM744,141h1v2h-1zM747,140h1v2h-1zM748,140h1v2h-1zM751,139h1v2h-1zM752,139h1v2h-1zM755,139h1v2h-1zM756,138h1v2h-1zM759,138h1v2h-1zM760,138h1v2h-1zM763,137h1v2h-1zM764,137h1v2h-1zM767,136h1v2h-1zM768,136h1v2h-1zM771,136h1v2h-1zM772,135h1v2h-1zM775,135h1v2h-1zM776,135h1v2h-1zM779,134h1v2h-1zM780,134h1v2h-1zM783,133h1v2h-1zM784,133h1v2h-1zM787,133h1v2h-1zM788,132h1v2h-1zM791,132h1v2h-1zM792,132h1v2h-1zM795,131h1v2h-1zM796,131h1v2h-1zM799,130h1v2h-1zM800,130h1v2h-1zM803,130h1v2h-1zM804,129h1v2h-1zM807,129h1v2h-1zM808,129h1v2h-1zM811,128h1v2h-1zM812,128h1v2h-1zM815,127h1v2h-1zM816,127h1v2h-1zM819,126h1v2h-1zM820,126h1v2h-1zM823,126h1v2h-1zM824,126h1v2h-1zM827,125h1v2h-1zM828,125h1v2h-1z" fill="#303e3a" shape-rendering="crispEdges"/>
<path transform="translate(603.5,219.6) rotate(-3) scale(0.97)" d="M0,0 L0,16 L3.7,12.6 L6.2,18.4 L8.6,17.4 L6.1,11.7 L11,11.7 Z" fill="#000" stroke="#fff" stroke-width="1"/>
</svg>
</body></html>
